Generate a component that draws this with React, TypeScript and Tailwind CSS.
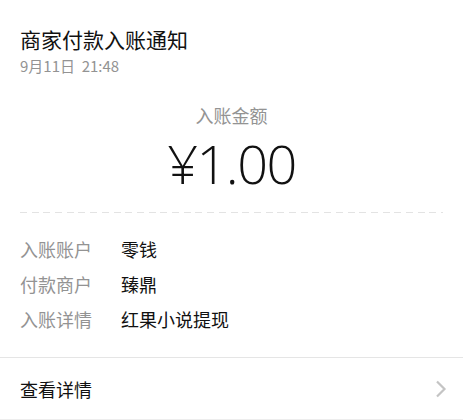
import React from 'react';

const rows = [
  { label: '入账账户', value: '零钱' },
  { label: '付款商户', value: '臻鼎' },
  { label: '入账详情', value: '红果小说提现' },
];

export default function App() {
  return (
    <div
      className="w-[463px] h-[420px] bg-[#ededed] overflow-hidden"
      style={{ fontFamily: '"Noto Sans CJK SC", "Noto Sans", sans-serif' }}
    >
      <div className="bg-white h-[419px] flex flex-col">
        {/* Header */}
        <div className="px-5 pt-[25px]">
          <h1 className="text-[21px] leading-[28px] text-[#111]">商家付款入账通知</h1>
          <p className="mt-[3px] text-[15px] leading-[20px] text-[#939393]">9月11日&nbsp;&nbsp;21:48</p>
        </div>

        {/* Amount */}
        <div className="flex flex-col items-center mt-[27px]">
          <p className="text-[18px] leading-[24px] text-[#939393]">入账金额</p>
          <p
            className="mt-[6px] text-[54px] leading-[60px] font-light tracking-[-1.5px] text-[#111]"
            style={{ fontFamily: '"Open Sans", "Noto Sans CJK SC", sans-serif' }}
          >
            ¥1.00
          </p>
        </div>

        <div className="mx-5 mt-[19px] h-px bg-[repeating-linear-gradient(to_right,#e3e3e3_0,#e3e3e3_7px,transparent_7px,transparent_11.7px)]" />

        {/* Detail rows */}
        <div className="px-5 pt-6 flex flex-col gap-[11px]">
          {rows.map((row) => (
            <div key={row.label} className="flex text-[18px] leading-[24px]">
              <span className="w-[101px] text-[#939393]">{row.label}</span>
              <span className="text-[#111]">{row.value}</span>
            </div>
          ))}
        </div>

        <div className="mt-[26px] h-px bg-[#e5e5e5]" />

        {/* Footer link */}
        <div className="flex-1 flex items-center justify-between pl-5 pr-[16px]">
          <span className="text-[18px] leading-[24px] text-[#111]">查看详情</span>
          <svg width="12" height="18" viewBox="0 0 12 18" fill="none">
            <path d="M2 1.5 L9.5 9 L2 16.5" stroke="#c4c4c4" strokeWidth="2.2" />
          </svg>
        </div>
      </div>
    </div>
  );
}
